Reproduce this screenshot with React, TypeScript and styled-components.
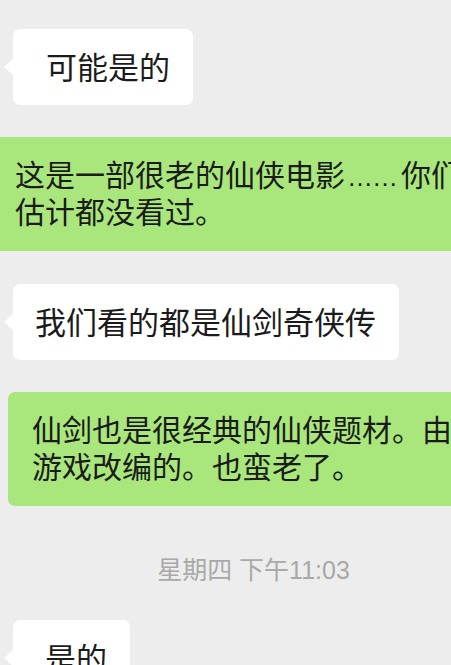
import React from "react";
import styled, { createGlobalStyle } from "styled-components";

const GlobalStyle = createGlobalStyle`
  html, body {
    margin: 0;
    padding: 0;
    background: #ededed;
  }
  body {
    font-family: "Noto Sans CJK SC", "Noto Sans", sans-serif;
  }
`;

const ChatPage = styled.div`
  width: 451px;
  height: 665px;
  overflow: hidden;
  background: #ededed;
  display: flex;
  flex-direction: column;
  align-items: flex-start;
  padding-top: 29px;
  box-sizing: border-box;
`;

const Bubble = styled.div<{ $gap: number }>`
  position: relative;
  flex-shrink: 0;
  margin-bottom: ${(p) => p.$gap}px;
  border-radius: 7px;
  font-size: 30px;
  line-height: 37px;
  color: #1b1b1b;
  white-space: nowrap;
  box-sizing: border-box;
`;

const ReceivedBubble = styled(Bubble)<{ $padLeft: number }>`
  margin-left: 13px;
  background: #ffffff;
  font-size: 31px;
  padding: 18px 23px 21px ${(p) => p.$padLeft}px;

  &::before {
    content: "";
    position: absolute;
    left: -9px;
    top: 30px;
    border-style: solid;
    border-width: 8px 9px 8px 0;
    border-color: transparent #ffffff transparent transparent;
  }
`;

const SentBubble = styled(Bubble)<{ $offset: number }>`
  margin-left: ${(p) => p.$offset}px;
  width: 520px;
  height: 114px;
  background: #a9e77c;
  padding: 18px 24px 22px 24px;
`;

const Ellipsis = styled.span`
  font-family: "Liberation Sans", sans-serif;
  font-size: 26px;
  line-height: 0;
  letter-spacing: -1px;
  margin: 0 4px 0 2px;
`;

const TimeRow = styled.div`
  align-self: stretch;
  display: flex;
  justify-content: center;
  padding-left: 56px;
  margin: 0 0 35px;
  font-family: "Liberation Sans", "Noto Sans CJK SC", sans-serif;
  font-size: 25px;
  line-height: 30px;
  color: #a9a9a9;
`;

const App: React.FC = () => {
  return (
    <>
      <GlobalStyle />
      <ChatPage>
        <ReceivedBubble $padLeft={33} $gap={32}>可能是的</ReceivedBubble>
        <SentBubble $offset={-9} $gap={33}>
          这是一部很老的仙侠电影<Ellipsis>……</Ellipsis>你们
          <br />
          估计都没看过。
        </SentBubble>
        <ReceivedBubble $padLeft={22} $gap={32}>
          我们看的都是仙剑奇侠传
        </ReceivedBubble>
        <SentBubble $offset={8} $gap={49}>
          仙剑也是很经典的仙侠题材。由
          <br />
          游戏改编的。也蛮老了。
        </SentBubble>
        <TimeRow>星期四 下午11:03</TimeRow>
        <ReceivedBubble $padLeft={32} $gap={0}>是的</ReceivedBubble>
      </ChatPage>
    </>
  );
};

export default App;
